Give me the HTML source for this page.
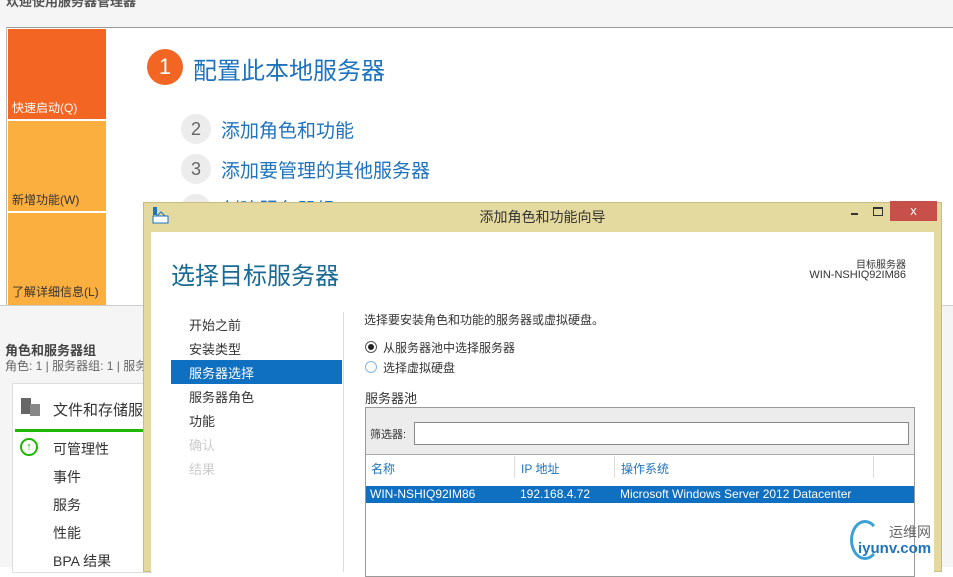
<!DOCTYPE html>
<html><head><meta charset="utf-8"><style>
*{margin:0;padding:0;box-sizing:border-box}
body{width:953px;height:567px;overflow:hidden;position:relative;background:#fff;font-family:"Liberation Sans","Noto Sans CJK SC",sans-serif;}
.a{position:absolute;white-space:nowrap}
</style></head><body>
<div class="a" style="left:0;top:0;width:953px;height:28px;background:#f5f5f5"></div>
<div class="a" style="left:6px;top:-9px;font-size:13px;font-weight:bold;color:#555">欢迎使用服务器管理器</div>
<div class="a" style="left:6px;top:27px;width:947px;height:1px;background:#999"></div>
<div class="a" style="left:6px;top:27px;width:1px;height:280px;background:#bbb"></div>
<div class="a" style="left:8px;top:29px;width:98px;height:90px;background:#f26522"></div>
<div class="a" style="left:8px;top:121px;width:98px;height:90px;background:#fbaf3f"></div>
<div class="a" style="left:8px;top:213px;width:98px;height:92px;background:#fbaf3f"></div>
<div class="a" style="left:12px;top:99px;font-size:12px;color:#fff">快速启动(Q)</div>
<div class="a" style="left:12px;top:191px;font-size:12px;color:#333">新增功能(W)</div>
<div class="a" style="left:12px;top:283px;font-size:12px;color:#333">了解详细信息(L)</div>
<div class="a" style="left:0;top:305px;width:953px;height:262px;background:#f5f5f5"></div>
<div class="a" style="left:0;top:305px;width:953px;height:1px;background:#ccc"></div>
<div class="a" style="left:147px;top:49px;width:36px;height:36px;border-radius:50%;background:#f26522;color:#fff;font-size:22px;text-align:center;line-height:36px">1</div>
<div class="a" style="left:193px;top:51px;font-size:24px;color:#1e73be">配置此本地服务器</div>
<div class="a" style="left:181px;top:114px;width:30px;height:30px;border-radius:50%;background:#ececec;color:#666;font-size:18px;text-align:center;line-height:30px">2</div>
<div class="a" style="left:221px;top:116px;font-size:19px;color:#1e73be">添加角色和功能</div>
<div class="a" style="left:181px;top:154px;width:30px;height:30px;border-radius:50%;background:#ececec;color:#666;font-size:18px;text-align:center;line-height:30px">3</div>
<div class="a" style="left:221px;top:156px;font-size:19px;color:#1e73be">添加要管理的其他服务器</div>
<div class="a" style="left:181px;top:194px;width:30px;height:30px;border-radius:50%;background:#ececec"></div>
<div class="a" style="left:221px;top:195px;font-size:19px;color:#1e73be">创建服务器组</div>
<div class="a" style="left:5px;top:340px;font-size:13px;font-weight:bold;color:#444">角色和服务器组</div>
<div class="a" style="left:5px;top:357px;font-size:12px;color:#666">角色: 1 | 服务器组: 1 | 服务</div>
<div class="a" style="left:12px;top:383px;width:140px;height:190px;background:#fff;border:1px solid #ddd"></div>
<div class="a" style="left:21px;top:398px;width:10px;height:16px;background:#666"></div>
<div class="a" style="left:30px;top:404px;width:10px;height:12px;background:#888"></div>
<div class="a" style="left:53px;top:399px;font-size:15px;color:#333">文件和存储服</div>
<div class="a" style="left:15px;top:429px;width:130px;height:3px;background:#1fb700"></div>
<div class="a" style="left:20px;top:438px;width:18px;height:18px;border-radius:50%;border:2px solid #1fb700;color:#1fb700;font-size:11px;font-weight:bold;text-align:center;line-height:14px">↑</div>
<div class="a" style="left:53px;top:439px;font-size:14px;color:#333">可管理性</div>
<div class="a" style="left:53px;top:467px;font-size:14px;color:#333">事件</div>
<div class="a" style="left:53px;top:495px;font-size:14px;color:#333">服务</div>
<div class="a" style="left:53px;top:523px;font-size:14px;color:#333">性能</div>
<div class="a" style="left:53px;top:551px;font-size:14px;color:#333">BPA 结果</div>

<div class="a" style="left:143px;top:202px;width:799px;height:370px;background:#e4d99e;border:1px solid #c8bc80"></div>
<div class="a" style="left:151px;top:232px;width:783px;height:340px;background:#fff"></div>
<svg class="a" style="left:152px;top:207px" width="17" height="17"><rect x="1" y="0" width="4" height="8" fill="#1e73be"/><rect x="1" y="9" width="15" height="7" fill="#fff" stroke="#1e73be"/><path d="M5 9 L9 5 L13 9" fill="none" stroke="#1e73be"/></svg>
<div class="a" style="left:143px;top:207px;width:799px;text-align:center;font-size:14px;color:#333">添加角色和功能向导</div>
<div class="a" style="left:851px;top:213px;width:7px;height:2px;background:#333"></div>
<div class="a" style="left:873px;top:207px;width:10px;height:9px;border:1px solid #333;border-top-width:2px"></div>
<div class="a" style="left:890px;top:201px;width:47px;height:20px;background:#c7504a;color:#fff;text-align:center;font-size:13px;line-height:20px">x</div>
<div class="a" style="left:171px;top:256px;font-size:24px;color:#1a6a96">选择目标服务器</div>
<div class="a" style="left:780px;top:256px;width:126px;text-align:right;font-size:10px;color:#333">目标服务器</div>
<div class="a" style="left:760px;top:269px;width:146px;text-align:right;font-size:11px;color:#333">WIN-NSHIQ92IM86</div>
<div class="a" style="left:343px;top:312px;width:1px;height:260px;background:#ddd"></div>
<div class="a" style="left:189px;top:315px;font-size:13px;color:#333">开始之前</div>
<div class="a" style="left:189px;top:339px;font-size:13px;color:#333">安装类型</div>
<div class="a" style="left:171px;top:360px;width:171px;height:24px;background:#0f6fc0"></div>
<div class="a" style="left:189px;top:363px;font-size:13px;color:#fff">服务器选择</div>
<div class="a" style="left:189px;top:387px;font-size:13px;color:#333">服务器角色</div>
<div class="a" style="left:189px;top:411px;font-size:13px;color:#333">功能</div>
<div class="a" style="left:189px;top:435px;font-size:13px;color:#ccc">确认</div>
<div class="a" style="left:189px;top:459px;font-size:13px;color:#ccc">结果</div>
<div class="a" style="left:364px;top:311px;font-size:12px;color:#333">选择要安装角色和功能的服务器或虚拟硬盘。</div>
<div class="a" style="left:365px;top:341px;width:12px;height:12px;border-radius:50%;border:1px solid #555"></div>
<div class="a" style="left:368px;top:344px;width:6px;height:6px;border-radius:50%;background:#222"></div>
<div class="a" style="left:383px;top:339px;font-size:12px;color:#333">从服务器池中选择服务器</div>
<div class="a" style="left:365px;top:361px;width:12px;height:12px;border-radius:50%;border:1px solid #8ab4e0"></div>
<div class="a" style="left:383px;top:359px;font-size:12px;color:#333">选择虚拟硬盘</div>
<div class="a" style="left:365px;top:388px;font-size:13px;color:#333">服务器池</div>
<div class="a" style="left:365px;top:407px;width:550px;height:170px;border:1px solid #999;background:#fff"></div>
<div class="a" style="left:366px;top:408px;width:548px;height:47px;background:#ececec;border-bottom:1px solid #aaa"></div>
<div class="a" style="left:370px;top:426px;font-size:11px;color:#333">筛选器:</div>
<div class="a" style="left:414px;top:422px;width:495px;height:23px;background:#fff;border:1px solid #888"></div>
<div class="a" style="left:371px;top:460px;font-size:12px;color:#1e73be">名称</div>
<div class="a" style="left:521px;top:460px;font-size:12px;color:#1e73be">IP 地址</div>
<div class="a" style="left:621px;top:460px;font-size:12px;color:#1e73be">操作系统</div>
<div class="a" style="left:514px;top:456px;width:1px;height:22px;background:#ddd"></div>
<div class="a" style="left:614px;top:456px;width:1px;height:22px;background:#ddd"></div>
<div class="a" style="left:873px;top:456px;width:1px;height:22px;background:#ddd"></div>
<div class="a" style="left:366px;top:486px;width:548px;height:17px;background:#0f6fc0"></div>
<div class="a" style="left:370px;top:487px;font-size:12px;color:#fff">WIN-NSHIQ92IM86</div>
<div class="a" style="left:520px;top:487px;font-size:12px;color:#fff">192.168.4.72</div>
<div class="a" style="left:620px;top:487px;font-size:12px;color:#fff">Microsoft Windows Server 2012 Datacenter</div>
<div class="a" style="left:850px;top:520px;width:30px;height:40px;border-radius:50%;border:3px solid #3aa0d8;border-right-color:transparent"></div>
<div class="a" style="left:889px;top:522px;font-size:14px;color:#666">运维网</div>
<div class="a" style="left:858px;top:540px;font-size:15px;font-weight:bold;color:#1e73be">iyunv.com</div>
</body></html>
